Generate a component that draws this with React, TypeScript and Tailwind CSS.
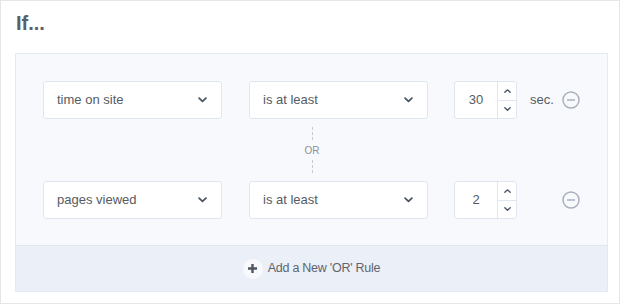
import React from "react";

const font = { fontFamily: '"Liberation Sans", Arial, sans-serif' };

function Chevron({ up = false, size = 9 }: { up?: boolean; size?: number }) {
  return (
    <svg width={size} height={size * 0.6} viewBox="0 0 10 6" className={up ? "rotate-180" : ""}>
      <path d="M1.2 1.2 L5 4.8 L8.8 1.2" fill="none" stroke="#4b5563" strokeWidth="2" strokeLinecap="round" strokeLinejoin="round" />
    </svg>
  );
}

function Select({ label }: { label: string }) {
  return (
    <div className="flex h-[38px] w-[179px] items-center justify-between rounded-[3px] border border-[#e0e6f0] bg-white pl-[13px] pr-[14px]">
      <span className="text-[13px] text-[#555b63]">{label}</span>
      <Chevron />
    </div>
  );
}

function NumberBox({ value }: { value: string }) {
  return (
    <div className="flex h-[38px] w-[63px] rounded-[3px] border border-[#e0e6f0] bg-white">
      <div className="flex w-[43px] items-center justify-center border-r border-[#e0e6f0] text-[13px] text-[#555b63]">{value}</div>
      <div className="flex flex-1 flex-col">
        <div className="flex flex-1 items-center justify-center border-b border-[#e0e6f0]">
          <Chevron up size={7} />
        </div>
        <div className="flex flex-1 items-center justify-center">
          <Chevron size={7} />
        </div>
      </div>
    </div>
  );
}

function Minus() {
  return (
    <svg width="18" height="18" viewBox="0 0 18 18">
      <circle cx="9" cy="9" r="8" fill="none" stroke="#a9b0bc" strokeWidth="1.5" />
      <line x1="5" y1="9" x2="13" y2="9" stroke="#a9b0bc" strokeWidth="1.5" />
    </svg>
  );
}

function Row({ a, b, n, unit }: { a: string; b: string; n: string; unit?: string }) {
  return (
    <div className="flex items-center">
      <Select label={a} />
      <div className="w-[27px]" />
      <Select label={b} />
      <div className="w-[26px]" />
      <NumberBox value={n} />
      <div className="ml-[13px] w-[32px] text-[13px] text-[#555b63]">{unit ?? ""}</div>
      <Minus />
    </div>
  );
}

export default function App() {
  return (
    <div className="h-[304px] w-[620px] border border-[#e6e6e6] bg-white pl-[14px] pr-[11px]" style={font}>
      <div className="pl-[1px] pt-[10px] text-[20px] font-bold leading-[24px] text-[#5a6069]">If...</div>
      <div className="mt-[18px] flex h-[239px] flex-col border border-[#e4e9f2] bg-[#f7f9fd]">
        <div className="flex flex-1 flex-col pl-[27px] pt-[27px]">
          <Row a="time on site" b="is at least" n="30" unit="sec." />
          <div className="flex w-[538px] flex-col items-center py-[8px]">
            <div className="h-[13px] border-l border-dashed border-[#c7ccd4]" />
            <div className="flex h-[20px] items-center text-[10px] text-[#8a9099]">OR</div>
            <div className="h-[13px] border-l border-dashed border-[#c7ccd4]" />
          </div>
          <Row a="pages viewed" b="is at least" n="2" />
        </div>
        <div className="flex h-[46px] items-center justify-center border-t border-[#e1e6ef] bg-[#ebeff7]">
          <div className="flex h-[20px] w-[20px] items-center justify-center rounded-full bg-[#f7f9fd]">
            <svg width="11" height="11" viewBox="0 0 11 11">
              <path d="M5.5 1 V10 M1 5.5 H10" stroke="#50565f" strokeWidth="2.4" />
            </svg>
          </div>
          <span className="ml-[5px] text-[12.5px] tracking-[-0.25px] text-[#5f656e]">Add a New 'OR' Rule</span>
        </div>
      </div>
    </div>
  );
}
